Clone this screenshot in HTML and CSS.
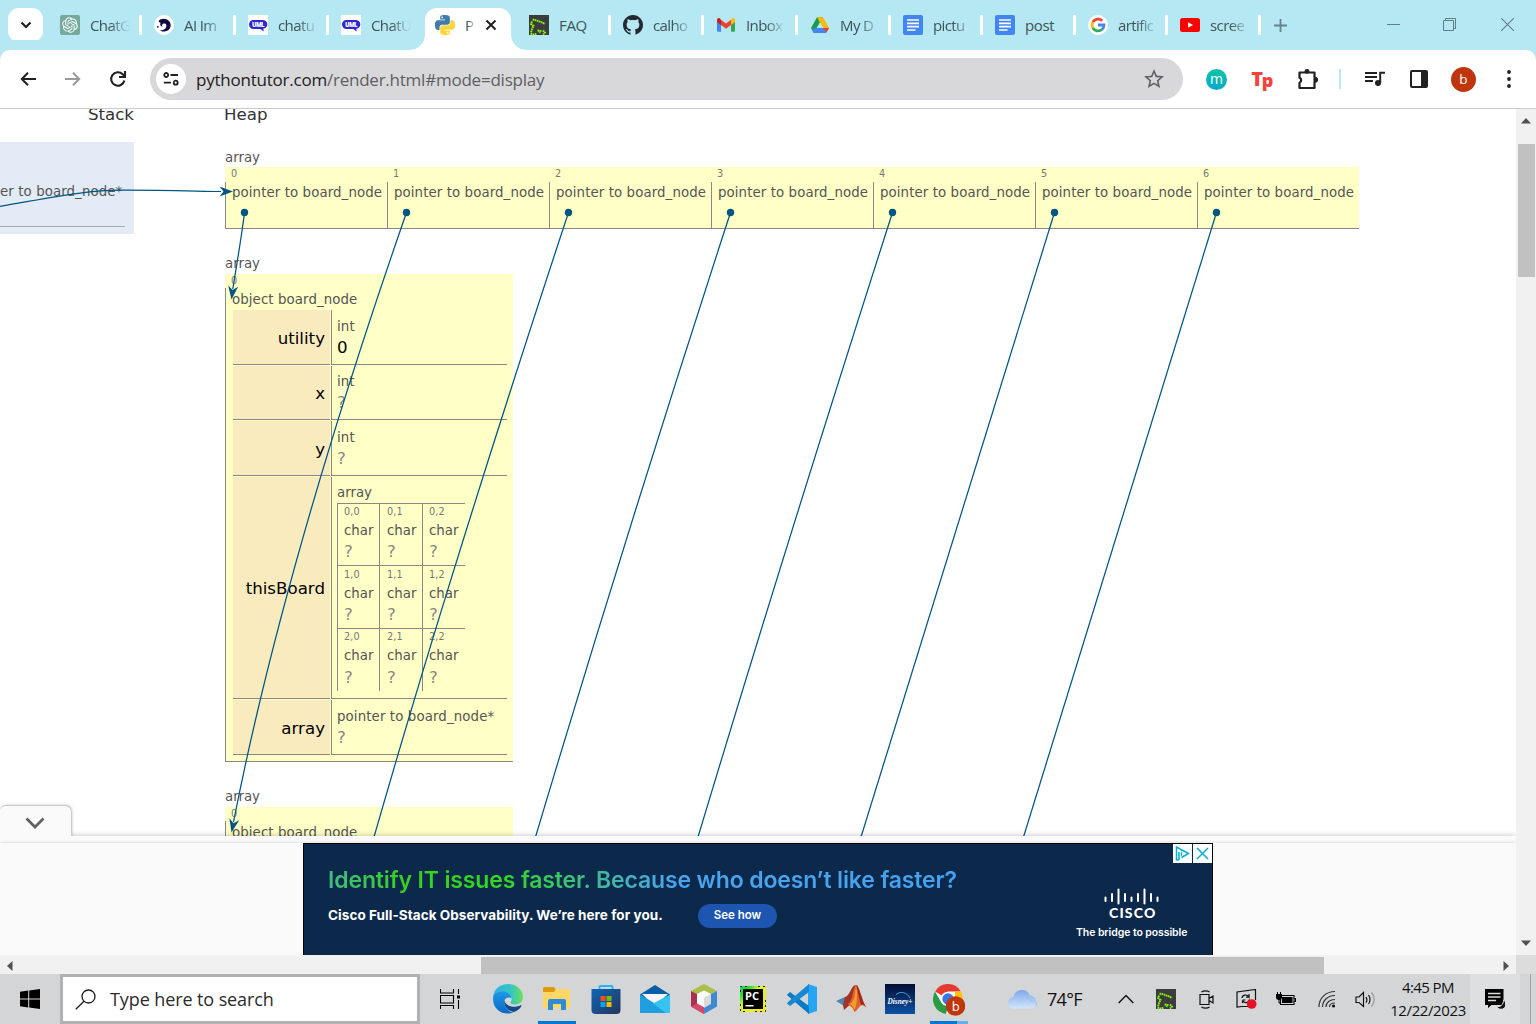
FILE: index.html
```html
<!DOCTYPE html>
<html lang="en">
<head>
<meta charset="utf-8">
<title>Python Tutor - Visualize code</title>
<link rel="stylesheet" href="styles.css">
</head>
<body>
<svg width="0" height="0" class="defs" aria-hidden="true">
  <defs>
    <symbol id="uml" viewBox="0 0 20 20"><rect width="20" height="20" fill="#fff"/><path d="M5.500 5h9a4.300 4.300 0 0 1 .8 8.800l.4 2.700-3.500-2.500H5.500A4.500 4.500 0 0 1 5.500 5z" fill="#2f27d0"/><text x="4" y="11.900" font-size="6" font-weight="800" fill="#fff" font-family="Open Sans, sans-serif" textLength="12">UML</text></symbol>
    <symbol id="docs" viewBox="0 0 20 20"><rect width="20" height="20" rx="2" fill="#4285f4"/><path d="M4 5h12M4 8.300h12M4 11.700h12M4 15h8.500" stroke="#fff" stroke-width="1.700"/></symbol>
    <symbol id="dots" viewBox="0 0 20 20"><rect width="20" height="20" fill="#3a3d3b"/><path d="M3.500 4.500l4 1 4.500 1.500 4 2M3 6.500L2 9l2.500 2-1.500 3-1 3.500M1.500 18.500l3 1 3-.5M8.500 15.500l3 .5-1 2M14 15.500l2 2-2 2" fill="none" stroke="#8cf516" stroke-width="1.900" stroke-dasharray="1.700 .5"/></symbol>
    <symbol id="py" viewBox="0 0 24 24"><path fill="#3f7cac" d="M14.250.18l.9.200.73.260.59.300.45.320.34.340.25.340.16.330.1.300.04.260.02.200-.01.130V8.500l-.05.630-.13.550-.21.460-.26.380-.3.310-.33.250-.35.190-.35.140-.33.100-.3.070-.26.040-.21.020H8.770l-.69.050-.59.140-.5.220-.41.270-.33.320-.27.350-.2.360-.15.370-.1.350-.07.320-.04.270-.02.210v3.060H3.170l-.21-.03-.28-.07-.32-.12-.35-.18-.36-.26-.36-.36-.35-.46-.32-.59-.28-.73-.21-.88-.14-1.050-.05-1.230.06-1.220.16-1.040.24-.87.320-.71.360-.57.400-.44.420-.33.420-.24.400-.16.360-.1.320-.05.240-.01h.16l.06.010h8.160v-.83H6.180l-.01-2.750-.02-.37.050-.34.110-.31.170-.28.250-.26.310-.23.380-.2.440-.18.510-.15.580-.12.640-.1.710-.06.770-.04.840-.02 1.270.05zm-6.300 1.980l-.23.330-.08.410.08.410.23.340.33.220.41.090.41-.09.330-.22.230-.34.080-.41-.08-.41-.23-.33-.33-.22-.41-.09-.41.090z"/><g transform="rotate(180 12 12)"><path fill="#ffd53d" d="M14.250.18l.9.200.73.260.59.300.45.320.34.340.25.340.16.330.1.300.04.260.02.200-.01.130V8.500l-.05.630-.13.550-.21.460-.26.380-.3.310-.33.250-.35.190-.35.140-.33.100-.3.070-.26.040-.21.020H8.770l-.69.050-.59.140-.5.220-.41.270-.33.320-.27.350-.2.360-.15.370-.1.350-.07.320-.04.270-.02.210v3.060H3.170l-.21-.03-.28-.07-.32-.12-.35-.18-.36-.26-.36-.36-.35-.46-.32-.59-.28-.73-.21-.88-.14-1.050-.05-1.230.06-1.220.16-1.040.24-.87.320-.71.360-.57.400-.44.420-.33.420-.24.400-.16.360-.1.320-.05.240-.01h.16l.06.010h8.160v-.83H6.180l-.01-2.750-.02-.37.050-.34.110-.31.170-.28.250-.26.310-.23.380-.2.440-.18.510-.15.580-.12.640-.1.710-.06.770-.04.840-.02 1.270.05zm-6.300 1.980l-.23.330-.08.410.08.410.23.340.33.220.41.090.41-.09.330-.22.230-.34.080-.41-.08-.41-.23-.33-.33-.22-.41-.09-.41.090z"/></g></symbol>
  </defs>
</svg>

<header class="tabstrip">
  <button class="tab-search"><svg width="12" height="8" viewBox="0 0 12 8"><path d="M1.500 1.500L6 6l4.500-4.500" fill="none" stroke="#202124" stroke-width="2.200"/></svg></button>
  <div class="tabs">
    <div class="tab"><svg viewBox="0 0 20 20"><rect width="20" height="20" rx="2" fill="#75a99b"/><g transform="translate(2.200 2.200) scale(.65)"><path fill="#fff" d="M22.2819 9.8211a5.9847 5.9847 0 0 0-.5157-4.9108 6.0462 6.0462 0 0 0-6.5098-2.9A6.0651 6.0651 0 0 0 4.9807 4.1818a5.9847 5.9847 0 0 0-3.9977 2.9 6.0462 6.0462 0 0 0 .7427 7.0966 5.98 5.98 0 0 0 .511 4.9107 6.051 6.051 0 0 0 6.5146 2.9001A5.9847 5.9847 0 0 0 13.2599 24a6.0557 6.0557 0 0 0 5.7718-4.2058 5.9894 5.9894 0 0 0 3.9977-2.9001 6.0557 6.0557 0 0 0-.7475-7.0729zm-9.022 12.6081a4.4755 4.4755 0 0 1-2.8764-1.0408l.1419-.0804 4.7783-2.7582a.7948.7948 0 0 0 .3927-.6813v-6.7369l2.02 1.1686a.071.071 0 0 1 .038.052v5.5826a4.504 4.504 0 0 1-4.4945 4.4944zm-9.6607-4.1254a4.4708 4.4708 0 0 1-.5346-3.0137l.142.0852 4.783 2.7582a.7712.7712 0 0 0 .7806 0l5.8428-3.3685v2.3324a.0804.0804 0 0 1-.0332.0615L9.74 19.9502a4.4992 4.4992 0 0 1-6.1408-1.6464zM2.3408 7.8956a4.485 4.485 0 0 1 2.3655-1.9728V11.6a.7664.7664 0 0 0 .3879.6765l5.8144 3.3543-2.0201 1.1685a.0757.0757 0 0 1-.071 0l-4.8303-2.7865A4.504 4.504 0 0 1 2.3408 7.872zm16.5963 3.8558L13.1038 8.364 15.1192 7.2a.0757.0757 0 0 1 .071 0l4.8303 2.7913a4.4944 4.4944 0 0 1-.6765 8.1042v-5.6772a.79.79 0 0 0-.407-.667zm2.0107-3.0231l-.142-.0852-4.7735-2.7818a.7759.7759 0 0 0-.7854 0L9.409 9.2297V6.8974a.0662.0662 0 0 1 .0284-.0615l4.8303-2.7866a4.4992 4.4992 0 0 1 6.6802 4.66zM8.3065 12.863l-2.02-1.1638a.0804.0804 0 0 1-.038-.0567V6.0742a4.4992 4.4992 0 0 1 7.3757-3.4537l-.142.0805L8.704 5.459a.7948.7948 0 0 0-.3927.6813zm1.0976-2.3654l2.602-1.4998 2.6069 1.4998v2.9994l-2.5974 1.4997-2.6067-1.4997Z"/></g></svg><span>ChatG</span></div>
    <div class="tab"><svg viewBox="0 0 20 20"><circle cx="10" cy="10" r="10" fill="#fff"/><path d="M4.500 6C7 3 12 3 15 6c3.500 4 1.500 10-4.500 10.500-2 .2-3.500-.3-4.500-1.200 4.500 0 7-2.300 6.300-5.300-.5-1.500-2.300-1.800-3.500-1-1 .6-1 1.800-.3 2.700-2-.3-2.800-2-2-4-.8-.2-1.500-.6-2-1.700z" fill="#0d0b3e"/><circle cx="3.800" cy="11.800" r=".9" fill="#0d0b3e"/></svg><span>AI Im</span></div>
    <div class="tab"><svg><use href="#uml"/></svg><span>chatu</span></div>
    <div class="tab"><svg><use href="#uml"/></svg><span>ChatU</span></div>
    <div class="tab active"><svg><use href="#py"/></svg><span>P</span><svg class="x" viewBox="0 0 12 12"><path d="M1.500 1.500l9 9M10.500 1.500l-9 9" stroke="#202124" stroke-width="2"/></svg></div>
    <div class="tab"><svg><use href="#dots"/></svg><span>FAQ</span></div>
    <div class="tab"><svg viewBox="0 .3 24 23.700"><path fill="#24292f" d="M12 .297c-6.630 0-12 5.373-12 12 0 5.303 3.438 9.800 8.205 11.385.6.113.82-.258.82-.577 0-.285-.01-1.040-.015-2.040-3.338.724-4.042-1.610-4.042-1.610C4.422 18.070 3.633 17.700 3.633 17.700c-1.087-.744.084-.729.084-.729 1.205.084 1.838 1.236 1.838 1.236 1.070 1.835 2.809 1.305 3.495.998.108-.776.417-1.305.76-1.605-2.665-.3-5.466-1.332-5.466-5.930 0-1.310.465-2.380 1.235-3.220-.135-.303-.54-1.523.105-3.176 0 0 1.005-.322 3.300 1.230.96-.267 1.980-.399 3-.405 1.020.006 2.040.138 3 .405 2.280-1.552 3.285-1.230 3.285-1.230.645 1.653.24 2.873.12 3.176.765.840 1.230 1.910 1.230 3.220 0 4.610-2.805 5.625-5.475 5.920.42.360.81 1.096.81 2.220 0 1.606-.015 2.896-.015 3.286 0 .315.21.690.825.570C20.565 22.092 24 17.592 24 12.297c0-6.627-5.373-12-12-12"/></svg><span>calho</span></div>
    <div class="tab"><svg viewBox="0 0 20 20"><path d="M1 5v10.500c0 .8.500 1.300 1.300 1.300H5V9z" fill="#4285f4"/><path d="M15 9v7.800h2.700c.8 0 1.300-.5 1.300-1.300V5z" fill="#34a853"/><path d="M15 5v5l4-3V5c0-2-1.800-2.500-3-1.600z" fill="#fbbc04"/><path d="M5 10V4.800L10 8.500l5-3.700V10l-5 3.800z" fill="#ea4335"/><path d="M1 5v2l4 3V5L4 3.400C2.800 2.500 1 3 1 5z" fill="#c5221f"/></svg><span>Inbox</span></div>
    <div class="tab"><svg viewBox="0 0 20 20"><path d="M7 2.300h6L4 18 1 13z" fill="#189b4c"/><path d="M7 2.300h6l6 10.700h-6z" fill="#fbb90a"/><path d="M4.200 13H19l-3 5H4a3 3 0 0 1-1.500-2z" fill="#4285f4"/><path d="M13 13h6l-2.500 4.500z" fill="#ea4335"/><path d="M10 7.500L6.800 13h6.400z" fill="#b5e8f2"/></svg><span>My D</span></div>
    <div class="tab"><svg><use href="#docs"/></svg><span>pictu</span></div>
    <div class="tab"><svg><use href="#docs"/></svg><span class="full">post</span></div>
    <div class="tab"><svg viewBox="0 0 20 20"><circle cx="10" cy="10" r="10" fill="#fff"/><g fill="none" stroke-width="2.800"><path d="M4.800 7.200A6 6 0 0 1 14.200 5.700" stroke="#ea4335"/><path d="M4.800 7.200a6 6 0 0 0 0 5.600" stroke="#fbbc05"/><path d="M4.800 12.800A6 6 0 0 0 14 14.500" stroke="#34a853"/><path d="M10 10h6a6 6 0 0 1-2 4.500" stroke="#4285f4"/></g></svg><span>artific</span></div>
    <div class="tab"><svg viewBox="0 0 20 20"><rect y="3" width="20" height="14" rx="2.500" fill="#f00"/><path d="M8 7.200v5.600l5-2.800z" fill="#fff"/></svg><span>scree</span></div>
  </div>
  <svg class="new-tab" viewBox="0 0 13 13"><path d="M6.500 0v13M0 6.500h13" stroke="#66828a" stroke-width="1.800"/></svg>
  <div class="win-buttons">
    <svg viewBox="0 0 13 13"><path d="M0 6.500h13" stroke="#5f7f87"/></svg>
    <svg viewBox="0 0 13 13"><path d="M.5 2.500h10v10H.500zM2.500 2.500v-2h10v10h-2" fill="none" stroke="#5f7f87"/></svg>
    <svg viewBox="0 0 13 13"><path d="M0 0l13 13M13 0L0 13" stroke="#5f7f87" stroke-width="1.100"/></svg>
  </div>
</header>

<nav class="toolbar">
  <svg width="16" height="14" viewBox="0 0 16 14"><path d="M16 7H2M8 .800L1.800 7 8 13.200" fill="none" stroke="#202124" stroke-width="2"/></svg>
  <svg width="16" height="14" viewBox="0 0 16 14"><path d="M0 7h14M8 .800L14.200 7 8 13.200" fill="none" stroke="#9a9a9c" stroke-width="2"/></svg>
  <svg width="18" height="18" viewBox="0 0 18 18"><path d="M15.400 10.500a6.700 6.700 0 1 1-1.700-6.200L16 6.500M16 1v6h-6" fill="none" stroke="#202124" stroke-width="2.100"/></svg>
  <div class="omnibox">
    <div class="site-info"><svg width="16" height="14" viewBox="0 0 16 14"><g fill="none" stroke="#202124" stroke-width="1.800"><circle cx="3.200" cy="3" r="2"/><path d="M7.500 3H15M.8 10.700H8"/><circle cx="12.700" cy="10.700" r="2"/></g></svg></div>
    <div class="url"><b>pythontutor.com</b>/render.html#mode=display</div>
    <svg width="24" height="24" viewBox="0 0 24 24"><path fill="#5f6063" d="M22 9.240l-7.190-.62L12 2 9.190 8.630 2 9.240l5.460 4.730L5.820 21 12 17.270 18.180 21l-1.630-7.030L22 9.240zM12 15.400l-3.760 2.270 1-4.280-3.320-2.880 4.380-.38L12 6.100l1.710 4.040 4.380.38-3.320 2.880 1 4.280L12 15.400z"/></svg>
  </div>
  <div class="ext-m">m</div>
  <div class="ext-tp"><i>T</i><em>p</em></div>
  <svg width="22" height="22" viewBox="0 0 22 22"><path d="M2.500 4.500H17.500v5.200a2 2 0 0 1 0 4.200V20H2.500v-5.200a2.700 2.700 0 0 0 0-5z" fill="none" stroke="#202124" stroke-width="2.200" stroke-linejoin="round"/><circle cx="10" cy="3.300" r="2.400" fill="#202124"/><circle cx="18.700" cy="11.800" r="2.400" fill="#202124"/></svg>
  <div class="divider"></div>
  <svg width="20" height="16" viewBox="0 0 20 16"><path d="M0 2h12M0 6h12M0 10h8" stroke="#202124" stroke-width="2"/><circle cx="13" cy="12" r="3" fill="#202124"/><path d="M15.200 12V1.800H20" fill="none" stroke="#202124" stroke-width="2"/></svg>
  <svg width="18" height="18" viewBox="0 0 18 18"><rect x="1" y="1" width="16" height="16" rx="1" fill="none" stroke="#202124" stroke-width="2"/><path d="M11 1h6v16h-6z" fill="#202124"/></svg>
  <div class="avatar">b</div>
  <svg width="4" height="18" viewBox="0 0 4 18"><g fill="#202124"><circle cx="2" cy="2" r="1.900"/><circle cx="2" cy="9" r="1.900"/><circle cx="2" cy="16" r="1.900"/></g></svg>
</nav>

<main class="viewport">
  <div class="page">
    <section class="canvas">
      <div class="stack">
        <h2>Stack</h2>
        <div class="frame"><p>er to board_node*</p></div>
      </div>
      <div class="heap">
        <h2>Heap</h2>
        <div class="label">array</div>
        <div class="array">
          <div class="cell"><i>0</i><div>pointer to board_node</div></div>
          <div class="cell"><i>1</i><div>pointer to board_node</div></div>
          <div class="cell"><i>2</i><div>pointer to board_node</div></div>
          <div class="cell"><i>3</i><div>pointer to board_node</div></div>
          <div class="cell"><i>4</i><div>pointer to board_node</div></div>
          <div class="cell"><i>5</i><div>pointer to board_node</div></div>
          <div class="cell"><i>6</i><div>pointer to board_node</div></div>
        </div>
        <div class="label obj-label">array</div>
        <div class="object">
          <i>0</i>
          <div class="object-body">
            <div class="type">object board_node</div>
            <div class="fields">
              <div class="key">utility</div><div class="val low"><span>int</span><b class="set">0</b></div>
              <div class="key">x</div><div class="val"><span>int</span><b>?</b></div>
              <div class="key">y</div><div class="val low"><span>int</span><b>?</b></div>
              <div class="key">thisBoard</div>
              <div class="val"><span>array</span>
                <div class="board">
                  <div><i>0,0</i><span>char</span><b>?</b></div><div><i>0,1</i><span>char</span><b>?</b></div><div><i>0,2</i><span>char</span><b>?</b></div>
                  <div><i>1,0</i><span>char</span><b>?</b></div><div><i>1,1</i><span>char</span><b>?</b></div><div><i>1,2</i><span>char</span><b>?</b></div>
                  <div><i>2,0</i><span>char</span><b>?</b></div><div><i>2,1</i><span>char</span><b>?</b></div><div><i>2,2</i><span>char</span><b>?</b></div>
                </div>
              </div>
              <div class="key">array</div><div class="val low"><span>pointer to board_node*</span><b>?</b></div>
            </div>
          </div>
        </div>
        <div class="label obj-label">array</div>
        <div class="object">
          <i>0</i>
          <div class="object-body"><div class="type">object board_node</div></div>
        </div>
      </div>
      <svg class="arrows" viewBox="0 109 1516 727" width="1516" height="727">
        <g fill="none" stroke="#005583" stroke-width="1.250">
          <path d="M0 206.300C55 197 85 190.300 122 190.200S190 191 221 191.500"/>
          <path d="M244.500 212.500C241 241 237 262 232.800 289"/>
          <path d="M406.500 212.500C335 418 272 626 233.500 822"/>
          <path d="M568.500 212.500C500 420 434 628 374 837"/>
          <path d="M730.500 212.500C663 420 598 628 535.500 837"/>
          <path d="M892.500 212.500C826 420 761 628 698 837"/>
          <path d="M1054.500 212.500C989 420 924 628 861 837"/>
          <path d="M1216.500 212.500C1151 420 1087 628 1023.500 837"/>
        </g>
        <g fill="#005583">
          <circle cx="244.500" cy="212.500" r="3.700"/><circle cx="406.500" cy="212.500" r="3.700"/><circle cx="568.500" cy="212.500" r="3.700"/><circle cx="730.500" cy="212.500" r="3.700"/><circle cx="892.500" cy="212.500" r="3.700"/><circle cx="1054.500" cy="212.500" r="3.700"/><circle cx="1216.500" cy="212.500" r="3.700"/>
          <path transform="translate(233 191.500)" d="M0 0L-13.500 5L-9.500 0L-13.500-5z"/>
          <path transform="translate(231.500 299.500) rotate(97)" d="M0 0L-13.500 5L-9.500 0L-13.500-5z"/>
          <path transform="translate(231.500 832.500) rotate(102)" d="M0 0L-13.500 5L-9.500 0L-13.500-5z"/>
        </g>
      </svg>
    </section>
    <section class="ad-panel">
      <div class="collapse"><svg width="20" height="12" viewBox="0 0 20 12"><path d="M1.500 1.500L10 10l8.500-8.500" fill="none" stroke="#616161" stroke-width="2.700"/></svg></div>
      <div class="ad-area">
        <div class="ad">
          <div class="ad-copy">
            <h3>Identify IT issues faster. Because who doesn’t like faster?</h3>
            <div class="ad-line"><p>Cisco Full-Stack Observability. We’re here for you.</p><span class="cta">See how</span></div>
          </div>
          <div class="brand">
            <div class="adchoices">
              <svg viewBox="0 0 19 19"><path d="M6 15.800L3.500 16V3L15.500 9.500 8.500 13.500M6 8v8" fill="none" stroke="#00aecd" stroke-width="1.500"/><path d="M8.500 5.800v1.500M8.500 8.200v3.500" stroke="#00aecd" stroke-width="1.500"/></svg>
              <svg viewBox="0 0 19 19"><path d="M4 4l11 11M15 4L4 15" stroke="#00aecd" stroke-width="1.500"/></svg>
            </div>
            <svg class="bars" width="56" height="17" viewBox="0 0 56 17"><path d="M1.500 9.500V13M8 6v7M14.500 1.500v14M21 6v7M27.500 9.500V13M34 6v7M40.500 1.500v14M47 6v7M53.500 9.500V13" stroke="#fff" stroke-width="2" stroke-linecap="round"/></svg>
            <div class="cisco">CISCO</div>
            <div class="tagline">The bridge to possible</div>
          </div>
        </div>
      </div>
    </section>
  </div>
  <div class="vbar"><svg width="10" height="6" viewBox="0 0 10 6"><path d="M0 5.500L5 0l5 5.500z" fill="#505050"/></svg><div class="thumb"></div><svg width="10" height="6" viewBox="0 0 10 6"><path d="M0 .500L5 6l5-5.500z" fill="#505050"/></svg></div>
  <div class="hbar"><svg width="6" height="10" viewBox="0 0 6 10"><path d="M5.500 0L0 5l5.500 5z" fill="#505050"/></svg><div class="thumb"></div><svg width="6" height="10" viewBox="0 0 6 10"><path d="M.5 0L6 5 .5 10z" fill="#505050"/></svg></div>
  <div class="corner"></div>
</main>

<footer class="taskbar">
  <svg width="20" height="20" viewBox="0 0 20 20"><path d="M0 2.800L8.200 1.600v7.900H0zM9.200 1.500L20 0v9.500H9.200zM0 10.500h8.200v7.900L0 17.200zM9.200 10.500H20V20L9.200 18.500z"/></svg>
  <div class="search"><svg width="21" height="21" viewBox="0 0 21 21"><circle cx="13.500" cy="7.500" r="6.500" fill="none" stroke="#1a1a1a" stroke-width="1.300"/><path d="M9 12.300L.8 20.200" stroke="#1a1a1a" stroke-width="1.300"/></svg><span>Type here to search</span></div>
  <svg width="20" height="20" viewBox="0 0 20 20"><path d="M.5 0v4h13V0M.5 20v-3.500h13V20M.5 6.500h13v7.500H.500zM18.500 0v5M18.500 11v9" fill="none" stroke="#000" stroke-width="1.100"/><path d="M17 6.500h3v3h-3z"/></svg>
  <div class="app"><svg viewBox="0 0 30 30"><defs><linearGradient id="e1" x1="0" x2="1"><stop offset="0" stop-color="#2bb0e8"/><stop offset=".6" stop-color="#36c6c0"/><stop offset="1" stop-color="#6ee05a"/></linearGradient><linearGradient id="e2" x1="0" y1="0" x2="0" y2="1"><stop offset="0" stop-color="#1e9be6"/><stop offset="1" stop-color="#0b66c2"/></linearGradient></defs><path d="M0 13C1 5 7 0 15 0c9 0 15 6 15 13 0 5-4 7.500-8 7.500-3 0-4.500-1-4.500-2 0-.8 1.200-1.500 1.200-3.500 0-3-3-6-7.500-6C6 9 2 11 0 15z" fill="url(#e1)"/><path d="M0 15C0 10 5 7 10 7.500c4 .3 8 2.500 8.500 7-1.500-1.500-6-1.500-7 2-1.500 5 3 11 9 12C12 32 0 27 0 15z" fill="url(#e2)"/><path d="M11.500 16.500c-1.500 5 3 10.500 9.500 11.500 3-1 6-3 7.500-6 .3-.7-.3-1-.9-.7-6 3-15 1.500-16.100-4.800z" fill="#114a8b"/></svg></div>
  <div class="app open"><svg viewBox="0 0 30 30"><path d="M1 4.500A1.500 1.500 0 0 1 2.500 3H12l2 3v2H1z" fill="#dd9a05"/><path d="M1 8h11l2-3h13a1 1 0 0 1 1 1v18.500H2a1 1 0 0 1-1-1z" fill="#ffd668"/><path d="M6 26V17a2 2 0 0 1 2-2h14a2 2 0 0 1 2 2v9h-5v-6h-8v6z" fill="#2d8bd8"/></svg></div>
  <div class="app"><svg viewBox="0 0 30 30"><defs><linearGradient id="st" x1="0" y1="0" x2="1" y2="1"><stop offset="0" stop-color="#0a66b8"/><stop offset="1" stop-color="#28355c"/></linearGradient></defs><path d="M8.500 6V3a1 1 0 0 1 1-1h11a1 1 0 0 1 1 1v3" fill="none" stroke="#24b5f2" stroke-width="1.900"/><path d="M.5 5h29v21a4 4 0 0 1-4 4h-21a4 4 0 0 1-4-4z" fill="url(#st)"/><path d="M9.500 12h5v5h-5z" fill="#f25022"/><path d="M15.500 12h5v5h-5z" fill="#7fba00"/><path d="M9.500 18h5v5h-5z" fill="#00a4ef"/><path d="M15.500 18h5v5h-5z" fill="#ffb900"/></svg></div>
  <div class="app"><svg viewBox="0 0 30 30"><path d="M0 10.500L15 1l15 9.500v4H0z" fill="#0a5da8"/><path d="M2 10h26L15 22z" fill="#f5f5f7"/><path d="M0 10.500l20 12L30 29H0z" fill="#1f9fe0"/><path d="M30 10.500L13 19.500 26 29h4z" fill="#35c3f3"/></svg></div>
  <div class="app"><svg viewBox="0 0 30 30"><path d="M2 7L15 0l13 7-6 3-7-3-7 3z" fill="#a9bf4a"/><path d="M2 7l6 3v10l7 4v6L2 22.500z" fill="#a8324f"/><path d="M28 7l-6 3v10l-7 4v6l13-7.500z" fill="#4287d4"/><path d="M2 22.500l6-3 7 4V30z" fill="#d8486a"/><path d="M8 10l7-3.500 7 3.500-7 4z" fill="#fbfbf7"/><path d="M8 10l7 4v9l-7-4z" fill="#fff"/><path d="M22 10l-7 4v9l7-4z" fill="#d9dcd5"/></svg></div>
  <div class="app"><svg viewBox="0 0 30 30"><defs><linearGradient id="pc" x1="0" y1="0" x2="1" y2="1"><stop offset="0" stop-color="#21d789"/><stop offset=".2" stop-color="#22e01f"/><stop offset=".4" stop-color="#dff03a"/><stop offset="1" stop-color="#f5e616"/></linearGradient></defs><path d="M2 2h26v26H2z" fill="url(#pc)"/><path d="M5 5h20v20H5z"/><path d="M2.500 8V2.500H9M20 2.500h7.500M27.500 16v11.500H15M2.500 20v7.500H7" fill="none" stroke="#222" stroke-dasharray="2 3"/><text x="7" y="15.500" font-size="10" font-weight="700" fill="#fff" font-family="Open Sans, sans-serif" textLength="14" lengthAdjust="spacingAndGlyphs">PC</text><path d="M7.500 21h8v1.500h-8z" fill="#fff"/></svg></div>
  <div class="app"><svg viewBox="0 0 30 30"><path d="M21 0l9 3v24l-9 3z" fill="#27a5f2"/><path d="M0 10.500L3 8l19 14v8L1 12z" fill="#0b7bc6"/><path d="M0 19.500L3 22 22 8V0L1 18z" fill="#1689d2"/></svg></div>
  <div class="app"><svg viewBox="0 0 30 30"><path d="M0 17l9-4 5 3-6 6-3-2z" fill="#4b86ad"/><path d="M9 13c5-1 6-12 11-12l-3 17-9 8-1-5z" fill="#a23328"/><path d="M20 1c3 0 5 13 10 22-4-3-6-2-8 2-2 2-4 4-4 2-1-4-5-5-6-7 5-3 4-13 8-19z" fill="#e2602a"/><path d="M20 1c-1 8-1 16-6 19 4 3 4 6 5 5 2-6 3-15 1-24z" fill="#f49b2c"/><path d="M20 1c3 0 5 13 10 22-3-3-4-3-5-2-2-6-3-14-5-20z" fill="#9c2a20"/></svg></div>
  <div class="app"><svg viewBox="0 0 30 30"><defs><linearGradient id="dp" x1="0" y1="0" x2="0" y2="1"><stop offset="0" stop-color="#030c33"/><stop offset="1" stop-color="#0b52a5"/></linearGradient></defs><rect width="30" height="30" fill="url(#dp)"/><path d="M11 10.500C16 6.500 22 8.500 25 14" fill="none" stroke="#2fa6d8" stroke-width="1"/><text x="2.500" y="19.500" font-size="8" font-style="italic" font-weight="700" fill="#fff" font-family="Liberation Serif, serif" textLength="25" lengthAdjust="spacingAndGlyphs">Disney+</text></svg></div>
  <div class="app open chrome"><svg viewBox="0 0 32 32"><circle cx="15" cy="15" r="15" fill="#fff"/><path d="M15 15L2 7.500A15 15 0 0 1 28 7.500H15z" fill="#e33b2e"/><path d="M28 7.500A15 15 0 0 1 15 30l6.500-11.300L22 7.500z" fill="#fbc116"/><path d="M2 7.500l6.500 11.200L15 22l-2 8A15 15 0 0 1 2 7.500z" fill="#2c9a46"/><circle cx="15" cy="15" r="7.300" fill="#fff"/><circle cx="15" cy="15" r="5.700" fill="#3b78e7"/><circle cx="22.500" cy="22" r="9.800" fill="#bf360c"/><text x="18.800" y="26.500" font-size="13" fill="#fff" font-family="Open Sans, sans-serif">b</text></svg></div>
  <div class="weather"><svg width="31" height="20" viewBox="0 0 31 20"><defs><linearGradient id="cl" x1="0" y1="0" x2="0" y2="1"><stop offset="0" stop-color="#7fa6ea"/><stop offset="1" stop-color="#d2e6fb"/></linearGradient></defs><path d="M6 19.500A5.800 5.800 0 0 1 6.500 8 8.500 8.500 0 0 1 22.800 6.500 6.600 6.600 0 0 1 24.500 19.500z" fill="url(#cl)"/><path d="M13 12c3-5 9-5 11 0 5-1 7 3 5 5" fill="none" stroke="#9dbff3"/></svg><span>74°F</span></div>
  <svg width="16" height="10" viewBox="0 0 16 10"><path d="M.7 9L8 1.500 15.300 9" fill="none" stroke="#111" stroke-width="1.400"/></svg>
  <svg width="20" height="20"><use href="#dots"/></svg>
  <svg width="15" height="19" viewBox="0 0 15 19"><path d="M1 4.500h9v10H1zM10 8.500l4-2.500v7l-4-2.500M2.500 2C4.500.5 8.500.5 10.500 2M2.500 17c2 1.500 6 1.500 8 0" fill="none" stroke="#111" stroke-width="1.200"/></svg>
  <svg width="21" height="20" viewBox="0 0 21 20"><path d="M12 17.500H6L1 18V3l18.500-2.500V11M6 9c.5-3.500 5-4 7-1V5M13 8.200h-3M13.500 10.500c-1 4-5.500 4-7 1V14M6.500 11h3" fill="none" stroke="#111" stroke-width="1.200"/><circle cx="15.700" cy="15" r="4.800" fill="#e81123"/></svg>
  <svg width="20" height="14" viewBox="0 0 20 14"><path d="M4.500 3.500h13.500v9H4.500zM18 6.500h1.500v3H18" fill="none" stroke="#000" stroke-width="1.100"/><path d="M6 5h10.500v6H6zM0 2h6v3a3 3 0 0 1-6 0z"/><path d="M1.500 0v2M4.500 0v2M3 7v4h2" fill="none" stroke="#000"/></svg>
  <svg width="18" height="18" viewBox="0 0 18 18"><g fill="none" stroke="#333" stroke-width="1.200"><path d="M1 17C1 8 8 1.500 17 1.500M4.500 17C4.500 10.500 10 5.500 17 5.500M8 17c0-4.500 4-7.500 9-7.500M11.500 17c0-2.500 2.500-4 5.500-4"/></g><circle cx="15.500" cy="16" r="1.500"/></svg>
  <svg width="21" height="17" viewBox="0 0 21 17"><path d="M1 6h3l4.500-4.500v14L4 11.500H1zM11 6c1 1.500 1 4 0 5.500M13.500 4c2 2.500 2 6.500 0 9" fill="none" stroke="#111" stroke-width="1.200"/><path d="M16.500 1.500c3.500 4 3.500 10 0 14" fill="none" stroke="#999" stroke-width="1.200"/></svg>
  <div class="clock"><span class="time">4:45 PM</span><span class="date">12/22/2023</span></div>
  <div class="notif"><svg width="20" height="20" viewBox="0 0 20 20"><path d="M0 0h18.500v16H6.500l-3.500 3V16H0z"/><path d="M3 4.500h12.500M3 8h12.500M3 11.500h8" stroke="#ddd" stroke-width="1.300"/><path d="M18.500 11a5 5 0 1 1-7 6.500c4 1 7-2 7-6.500z" fill="#111" stroke="#ddd"/></svg></div>
  <div class="peek"></div>
</footer>
</body>
</html>
```
FILE: styles.css
```css
* { box-sizing: border-box; margin: 0; padding: 0; }
body { width: 1536px; height: 1024px; overflow: hidden; display: flex; flex-direction: column; background: #fff; font-family: "Open Sans", "Noto Sans", sans-serif; }
.defs { position: absolute; }
svg { display: block; flex: none; }
i, em { font-style: normal; }
b, h2, h3 { font-weight: 400; }

/* Tab strip */
.tabstrip { height: 50px; flex: none; background: #b5e8f2; display: flex; align-items: flex-start; }
.tab-search { width: 35px; height: 34px; margin: 8px 5px 0 8px; border: 0; border-radius: 11px; background: #fff; display: flex; align-items: center; justify-content: center; }
.tabs { display: flex; }
.tab { width: 93px; height: 42px; margin-top: 8px; padding: 0 0 8px 12px; display: flex; align-items: center; position: relative; color: #3f5358; font-size: 15px; letter-spacing: -.6px; }
.tab:nth-child(1), .tab:nth-child(2), .tab:nth-child(4), .tab:nth-child(5), .tab:nth-child(6), .tab:nth-child(8) { width: 94px; }
.tab:nth-child(10), .tab:nth-child(12) { width: 92px; }
.tab svg { width: 20px; height: 20px; }
.tab span { margin-left: 10px; white-space: nowrap; line-height: 22px; -webkit-mask-image: linear-gradient(90deg, #000 20px, transparent 40px); mask-image: linear-gradient(90deg, #000 20px, transparent 40px); }
.tab::after { content: ""; width: 3px; height: 20px; margin-left: auto; background: #fff; border-radius: 1px; }
.tab:nth-child(4)::after { display: none; }
.tab.active::before { content: ""; position: absolute; z-index: 0; left: 2px; top: 0; width: 86px; height: 42px; background: #fff; border-radius: 12px 12px 0 0; }
.tab.active::after { display: block; position: absolute; left: -13px; bottom: 0; width: 116px; height: 15px; border-radius: 0; background: radial-gradient(circle at 0 0, transparent 14.500px, #fff 15px) left / 15px 15px no-repeat, radial-gradient(circle at 100% 0, transparent 14.500px, #fff 15px) right / 15px 15px no-repeat; }
.tab.active > * { position: relative; z-index: 1; }
.tab.active span { width: 9px; margin-left: 10px; -webkit-mask-image: linear-gradient(90deg, #000 3px, transparent 11px); mask-image: linear-gradient(90deg, #000 3px, transparent 11px); }
.tab.active .x { width: 12px; height: 12px; margin-left: 11px; }
.tab:nth-child(6) span, .tab span.full { -webkit-mask-image: none; mask-image: none; letter-spacing: -.35px; }
.new-tab { width: 13px; height: 13px; margin: 19px 0 0 13px; }
.win-buttons { display: flex; gap: 44px; margin: 18px 22px 0 auto; }
.win-buttons svg { width: 13px; height: 13px; }
.win-buttons svg:nth-child(2) { margin: 0 1px 0 -1px; }

/* Toolbar */
.toolbar { height: 59px; flex: none; background: #fff; border-bottom: 1px solid #cbcbcd; display: grid; grid-template-columns: 45px 45px 45px 10px 1033px 11px 45px 45px 47px 18px 51px 38px 51px 39px; padding-left: 5px; justify-items: center; align-items: center; border-radius: 10px 10px 0 0; box-shadow: 0 -10px 0 0 #b5e8f2; }
.omnibox { grid-column: 5; width: 1033px; height: 42px; border-radius: 21px; background: #d8d8db; display: flex; align-items: center; padding: 0 17px 0 6px; }
.ext-m { grid-column: 7; width: 21px; height: 21px; border-radius: 50%; background: linear-gradient(#07c5a3, #0ba9cf); color: #fff; font-size: 14px; line-height: 19px; text-align: center; }
.site-info { width: 30px; height: 30px; border-radius: 50%; background: #fff; display: grid; place-items: center; }
.url { flex: 1; margin-left: 10px; font-size: 17px; letter-spacing: -.23px; color: #5d5e62; line-height: 24px; padding-top: 1px; }
.url b { color: #1f2024; }
.ext-tp { display: flex; color: #f5423c; font: 800 20px/20px "Open Sans", sans-serif; letter-spacing: -1.500px; }
.ext-tp em { padding-top: 1px; font-size: 18px; }
.divider { width: 2px; height: 20px; background: #b5e8f2; }
.avatar { width: 25px; height: 25px; border-radius: 50%; background: #bf360c; color: #fff; font-size: 13.500px; line-height: 25px; text-align: center; }

/* Page viewport */
.viewport { height: 865px; flex: none; display: grid; grid-template: 846px 19px / 1516px 20px; }
.page { overflow: hidden; font-family: "DejaVu Sans", sans-serif; }
.canvas { height: 727px; overflow: hidden; display: flex; position: relative; font-size: 13.330px; color: #555; background: #fff; }
.arrows { position: absolute; left: 0; top: 0; }
.stack { width: 134px; overflow: hidden; margin-right: 91px; }
.canvas h2 { height: 20px; margin-top: -5px; font-size: 16.670px; line-height: 22px; color: #333; }
.stack h2 { text-align: right; }
.heap h2 { margin-left: -1px; }
.frame { height: 92px; margin-top: 18px; background: #e2ebf6; padding-top: 39px; }
.frame p { width: 125px; height: 46px; line-height: 21px; white-space: nowrap; border-bottom: 1px solid #aaa; letter-spacing: .1px; }
.heap { width: 1134px; flex: none; }
.label { height: 18px; margin-top: 25px; line-height: 18px; }
.obj-label { margin: 26px 0 1px; }
.heap i { display: block; font-size: 9.700px; letter-spacing: .15px; color: #777; }
.array { display: grid; grid-template-columns: repeat(7, 162px); background: #ffffc6; }
.cell i { height: 15px; line-height: 13px; padding-left: 6px; }
.cell div { height: 47px; border-left: 1px solid #888; border-bottom: 1px solid #888; padding-left: 6px; line-height: 21px; letter-spacing: .1px; white-space: nowrap; }
.object { width: 288px; background: #ffffc6; }
.object > i { height: 14px; line-height: 14px; padding-left: 6px; }
.object-body { height: 474px; border-left: 1px solid #888; border-bottom: 1px solid #888; padding: 1px 6px 0; }
.type { line-height: 21px; letter-spacing: .1px; }
.fields { margin-left: 1px; display: grid; grid-template-columns: 97px 176px; grid-template-rows: 55px 54px 55px 222px 55px; gap: 1px; }
.key { background: #faebbf; border-bottom: 1px solid #888; color: #000; font-size: 16.670px; display: flex; align-items: center; justify-content: flex-end; padding: 2px 5px 0 0; }
.val { border-left: 1px solid #888; border-bottom: 1px solid #888; padding: 8px 0 0 5px; white-space: nowrap; }
.val.low { padding-top: 9px; letter-spacing: .12px; }
.val span, .val b { display: block; line-height: 16px; }
.val b { line-height: 26px; font-size: 16.670px; color: #888; }
.val b.set { color: #000; }
.board { margin-top: 2px; display: grid; grid-template-columns: 42px 43px 43px; grid-template-rows: 62px 63px 63px; }
.board div { border-left: 1px solid #888; border-top: 1px solid #888; padding: 1px 0 0 6px; }
.board div:nth-child(3n+2) { padding-left: 7px; }
.board div:nth-child(n+4):nth-child(-n+6) { padding-top: 2px; }
.board i { line-height: 14px; }
.board span { line-height: 24px; }
.board b { line-height: 18px; }
.board div:nth-child(n+7) b { line-height: 20px; }

/* Bottom ad */
.ad-panel { height: 119px; position: relative; z-index: 1; background: #fafafa; padding-top: 7px; box-shadow: 0 -1px 5px rgba(0,0,0,.2); }
.collapse { position: absolute; left: -1px; top: -31px; width: 73px; height: 32px; background: #fafafa; border: 1px solid #ccc; border-width: 1px 1px 0 0; border-radius: 7px 7px 0 0; display: grid; place-items: center; padding: 3px 0 0; box-shadow: 1px -1px 2px rgba(0,0,0,.12); clip-path: inset(-4px -4px 1px 0); }
.ad-area { height: 112px; background: #fafafa; box-shadow: 0 0 3px rgba(0,0,0,.2); }
.ad { width: 910px; height: 112px; margin-left: 303px; background: #0c294b; border: 1px solid #000; border-bottom: 0; display: flex; justify-content: space-between; font-family: Inter, sans-serif; color: #fff; }
.ad-copy { padding: 21px 0 0 24px; }
.ad h3 { width: max-content; font-size: 23px; font-weight: 600; line-height: 30px; letter-spacing: -.14px; background: linear-gradient(90deg, #43b984 0, #35d21d 12%, #32d823 28%, #3fbf80 40%, #49a5ef 55%, #45a2f2); -webkit-background-clip: text; background-clip: text; color: transparent; }
.ad-line { display: flex; align-items: center; margin-top: 9px; }
.ad-line p { width: 370px; margin-top: -2px; white-space: nowrap; font-size: 13.500px; font-weight: 700; letter-spacing: .06px; }
.cta { width: 79px; height: 24px; border-radius: 12px; background: #1d55b1; font-size: 11.500px; font-weight: 600; line-height: 23px; text-align: center; }
.brand { width: 140px; display: flex; flex-direction: column; }
.adchoices { display: flex; gap: 1px; align-self: flex-end; }
.adchoices svg { width: 19px; height: 19px; background: #fff; }
.bars { margin: 25px 0 0 32px; }
.cisco { margin: 0 0 0 37px; font: 900 14px/16px Lato, sans-serif; letter-spacing: 1.200px; }
.tagline { margin: 4px 0 0 4px; font-size: 10.500px; font-weight: 600; letter-spacing: -.08px; line-height: 16px; white-space: nowrap; }

/* Scrollbars */
.vbar { background: #f1f1f1; display: flex; flex-direction: column; align-items: center; padding: 9px 0; }
.vbar .thumb { width: 17px; height: 133px; margin: 20px 0 auto 1px; background: #c1c1c1; }
.hbar { background: #f1f1f1; display: flex; align-items: center; padding: 2px 7px 0; }
.hbar .thumb { width: 843px; height: 17px; margin: 0 auto 0 468px; background: #c1c1c1; }
.corner { background: #dcdcdc; }

/* Taskbar */
.taskbar { height: 50px; flex: none; background: #d4d5d7; display: grid; grid-template-columns: 60px 360px 60px repeat(10, 49px) 136px 40px 40px 41px 39px 40px 41px 37px 86px 50px 16px; justify-items: center; align-items: center; color: #111; }
.search { width: 360px; height: 50px; background: #fff; border: 3px solid #b1b1b1; display: flex; align-items: center; padding-left: 12px; font-size: 18px; letter-spacing: -.1px; color: #2b2b2b; }
.search span { margin-left: 14px; }
.app { width: 49px; height: 50px; display: grid; place-items: center; position: relative; left: 3.500px; }
.app svg { width: 30px; height: 30px; }
.open::after { content: ""; position: absolute; left: 5px; bottom: 0; width: 38px; height: 3px; background: #0078d7; }
.chrome svg { width: 32px; height: 32px; margin-top: 2px; }
.chrome::after { background: linear-gradient(90deg, #0078d7 27px, #69b0ea 27px); }
.weather { display: flex; align-items: center; width: 136px; padding-left: 37px; gap: 9px; font-size: 18px; letter-spacing: -.7px; }
.clock { display: flex; flex-direction: column; align-items: center; font-size: 15px; line-height: 23px; letter-spacing: -.4px; padding-left: 2px; white-space: nowrap; }
.time { letter-spacing: -.6px; }
.notif { width: 50px; height: 50px; background: #dedfe0; display: grid; place-items: center; }
.peek { width: 16px; height: 50px; background: linear-gradient(90deg, transparent 10px, #a3a3a5 10px, #a3a3a5 11px, transparent 11px); }
```
